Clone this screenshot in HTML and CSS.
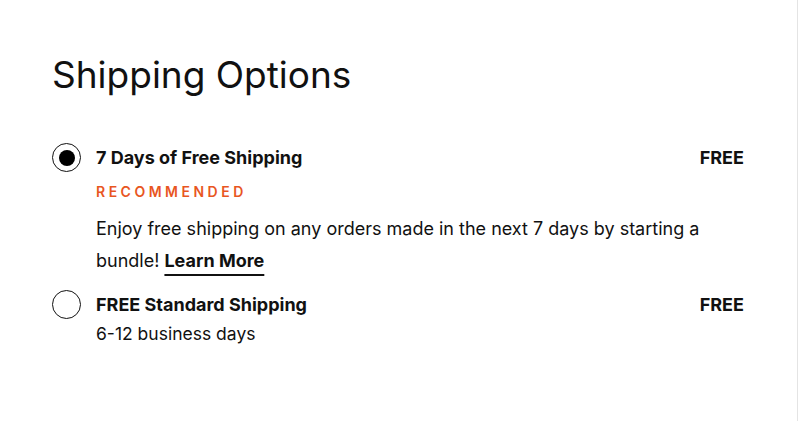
FILE: index.html
```html
<!DOCTYPE html>
<html>
<head>
<meta charset="utf-8">
<link rel="stylesheet" href="styles.css">
</head>
<body>
<div class="panel">
  <h1 class="heading">Shipping Options</h1>
  <div class="options">
    <div class="option">
      <span class="radio checked"></span>
      <div class="title">7 Days of Free Shipping</div>
      <div class="price">FREE</div>
      <div class="tag">RECOMMENDED</div>
      <p class="desc"><span>Enjoy free shipping on any orders made in the next 7 days by starting a bundle!</span> <a class="link" href="#">Learn More</a></p>
    </div>
    <div class="option second">
      <span class="radio"></span>
      <div class="title">FREE Standard Shipping</div>
      <div class="price">FREE</div>
      <div class="sub">6-12 business days</div>
    </div>
  </div>
</div>
</body>
</html>
```
FILE: styles.css
```css
html, body {
  margin: 0;
  padding: 0;
  background: #fff;
}
body {
  font-family: Inter, "Noto Sans", sans-serif;
  color: #111;
}
.panel {
  width: 798px;
  height: 421px;
  box-sizing: border-box;
  border-right: 1px solid #e4e4e4;
  padding: 53px 53px 0 52px;
}
.heading {
  margin: 0;
  font-size: 37px;
  font-weight: 400;
  line-height: 44px;
  letter-spacing: 0;
}
.options {
  margin-top: 46px;
  display: flex;
  flex-direction: column;
  gap: 13px;
}
.option {
  display: grid;
  grid-template-columns: 29px 1fr auto;
  column-gap: 15px;
  align-items: start;
}
.radio {
  width: 29px;
  height: 29px;
  box-sizing: border-box;
  border: 1.5px solid #111;
  border-radius: 50%;
  display: flex;
  align-items: center;
  justify-content: center;
}
.radio.checked::after {
  content: "";
  width: 16px;
  height: 16px;
  border-radius: 50%;
  background: #000;
}
.title {
  font-weight: 700;
  font-size: 18px;
  line-height: 29px;
}
.tag,
.desc,
.sub {
  grid-column: 2 / 4;
}
.tag {
  margin-top: 10px;
  color: #e8561f;
  font-size: 14px;
  font-weight: 600;
  letter-spacing: 3.5px;
  line-height: 20px;
}
.desc {
  margin: 11px 0 0;
  font-size: 18px;
  line-height: 32px;
}
.link {
  color: #111;
  font-weight: 700;
  text-decoration: underline;
  text-decoration-thickness: 1.5px;
  text-underline-offset: 7px;
}
.sub {
  font-size: 17.5px;
  line-height: 30px;
}
.price {
  font-weight: 700;
  font-size: 18px;
  line-height: 29px;
}
```
